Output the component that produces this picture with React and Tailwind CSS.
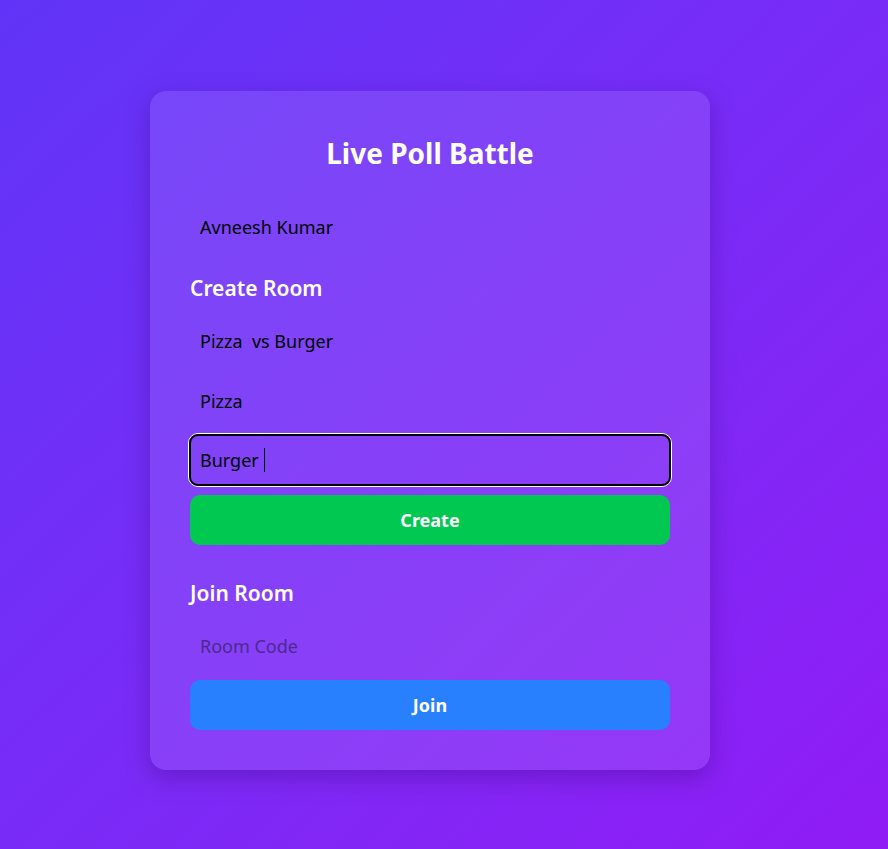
export default function App() {
  const font = { fontFamily: '"Noto Sans", "Open Sans", sans-serif' };
  const inputCls =
    "block w-full h-[50px] px-[10px] text-[18px] bg-transparent text-black placeholder:text-[#4b2a8f] outline-none rounded-[8px] border-0";
  return (
    <div
      className="min-h-[849px] w-full bg-gradient-to-br from-[#6034f8] to-[#901bf5] flex justify-center pr-[28px] pt-[91px]"
      style={font}
    >
      <div className="w-[560px] h-[679px] rounded-[16px] bg-white/10 shadow-[0_8px_24px_rgba(60,0,120,0.35)] px-[40px] pt-[40px] pb-[40px] flex flex-col">
        <h1 className="text-[28px] leading-[44px] font-bold text-white text-center">Live Poll Battle</h1>
        <input className={inputCls + " mt-[27px]"} defaultValue="Avneesh Kumar" />
        <h2 className="mt-[23px] text-[21px] leading-[26px] font-semibold text-white">Create Room</h2>
        <input className={inputCls + " mt-[15px]"} defaultValue="Pizza  vs Burger" />
        <input className={inputCls + " mt-[10px]"} defaultValue="Pizza" />
        <div className="mt-[7px] -mx-[2px] h-[54px] rounded-[10px] border border-white">
          <div className="h-full rounded-[9px] border-2 border-black flex items-center pl-[9px]">
            <span className="text-[18px] text-black">Burger</span>
            <span className="ml-[5px] w-px h-[24px] bg-black" />
          </div>
        </div>
        <button className="mt-[8px] h-[50px] w-full rounded-[10px] bg-[#00c851] text-white text-[18px] font-bold">
          Create
        </button>
        <h2 className="mt-[35px] text-[21px] leading-[26px] font-semibold text-white">Join Room</h2>
        <input className={inputCls + " mt-[15px]"} placeholder="Room Code" />
        <button className="mt-[9px] h-[50px] w-full rounded-[10px] bg-[#2880ff] text-white text-[18px] font-bold">
          Join
        </button>
      </div>
    </div>
  );
}
